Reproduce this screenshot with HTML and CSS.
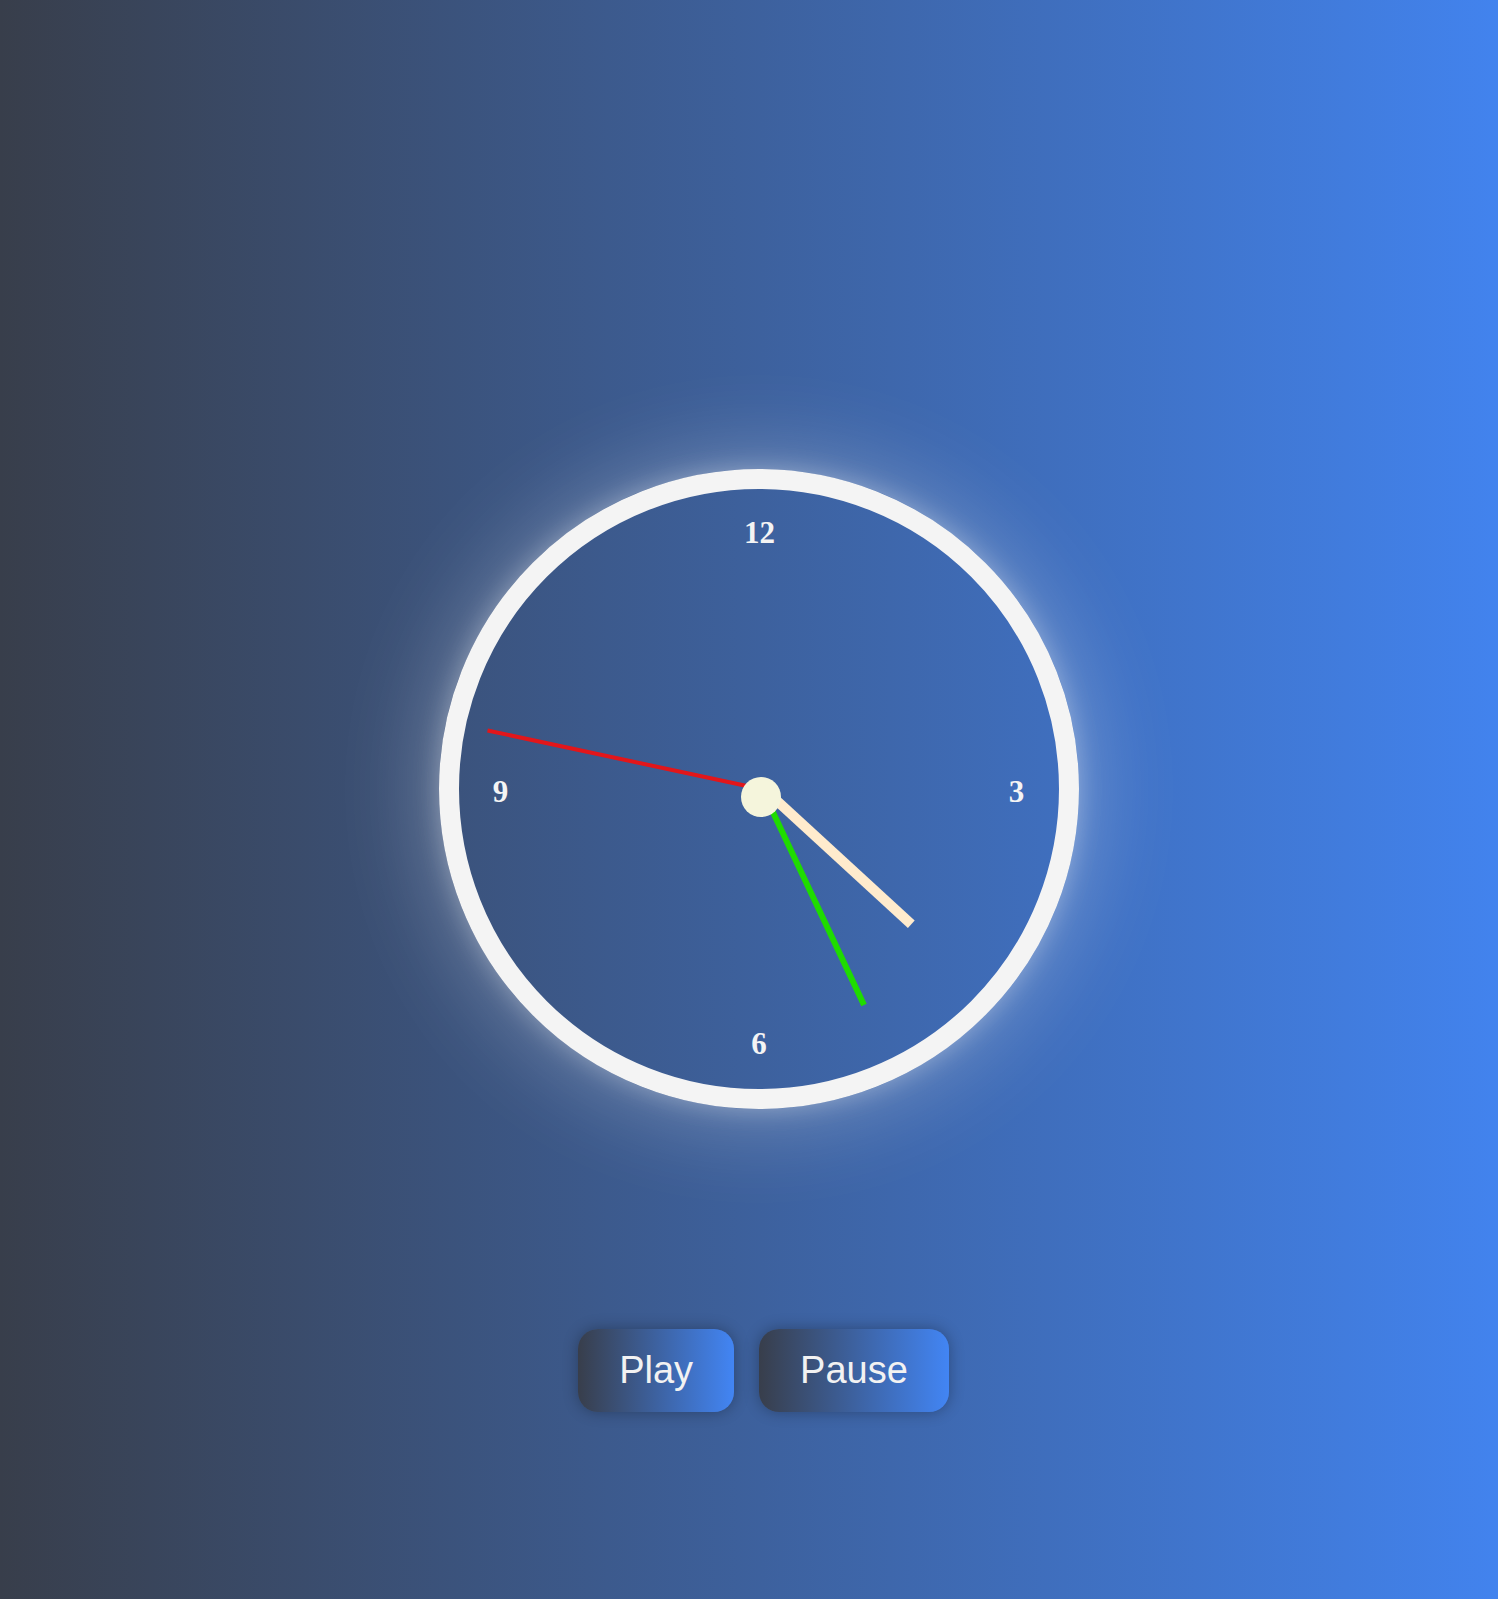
FILE: index.html
```html
<!DOCTYPE html>
<html lang="en">
<head>
<meta charset="utf-8">
<title>Clock</title>
<link rel="stylesheet" href="styles.css">
</head>
<body>
<main class="page">
  <div class="clock">
    <span class="num num-12">12</span>
    <span class="num num-3">3</span>
    <span class="num num-6">6</span>
    <span class="num num-9">9</span>
    <svg class="hands" width="600" height="600" viewBox="0 0 600 600">
      <line x1="302" y1="300" x2="28.5" y2="241.5" stroke="#e2161a" stroke-width="4"/>
      <line x1="303" y1="300" x2="405" y2="516" stroke="#1fdc00" stroke-width="6"/>
      <line x1="305" y1="300" x2="452.3" y2="435.2" stroke="#ffebcd" stroke-width="10"/>
    </svg>
    <span class="cap"></span>
  </div>
  <div class="controls">
    <button class="btn">Play</button>
    <button class="btn">Pause</button>
  </div>
</main>
</body>
</html>
```

FILE: styles.css
```css
html, body {
  margin: 0;
  padding: 0;
}

body {
  min-height: 1599px;
  background: linear-gradient(to right, #383e4b, #4283ee);
  font-family: "Liberation Sans", Arial, sans-serif;
}

.page {
  display: flex;
  flex-direction: column;
  align-items: center;
  padding: 469px 0 0 20px;
  box-sizing: border-box;
  min-height: 1599px;
}

.clock {
  position: relative;
  width: 640px;
  height: 640px;
  box-sizing: border-box;
  border: 20px solid #f4f4f4;
  border-radius: 50%;
  box-shadow: 0 0 25px rgba(255, 255, 255, 0.3), 0 0 100px rgba(255, 255, 255, 0.35);
}

.num {
  position: absolute;
  width: 60px;
  height: 32px;
  margin: -16px 0 0 -30px;
  text-align: center;
  font-family: "Liberation Serif", "Times New Roman", serif;
  font-weight: bold;
  font-size: 31px;
  line-height: 32px;
  color: #f4f4f4;
}

.num-12 { left: 300.5px; top: 44px; }
.num-6  { left: 300px; top: 555px; }
.num-9  { left: 41.5px; top: 303px; }
.num-3  { left: 557.5px; top: 302.5px; }

.hands {
  position: absolute;
  left: 0;
  top: 0;
}

.cap {
  position: absolute;
  left: 282px;
  top: 288px;
  width: 40px;
  height: 40px;
  border-radius: 50%;
  background: #f5f5dc;
}

.controls {
  display: flex;
  gap: 25px;
  margin-top: 220px;
  margin-left: 9px;
}

.btn {
  height: 83px;
  padding: 0 41px;
  border: none;
  border-radius: 20px;
  background: linear-gradient(to right, #383e4b, #4285f4);
  color: #f2f2f2;
  font-family: "Liberation Sans", Arial, sans-serif;
  font-size: 38px;
  box-shadow: 0 0 15px rgba(0, 0, 0, 0.3);
  cursor: pointer;
}
```
